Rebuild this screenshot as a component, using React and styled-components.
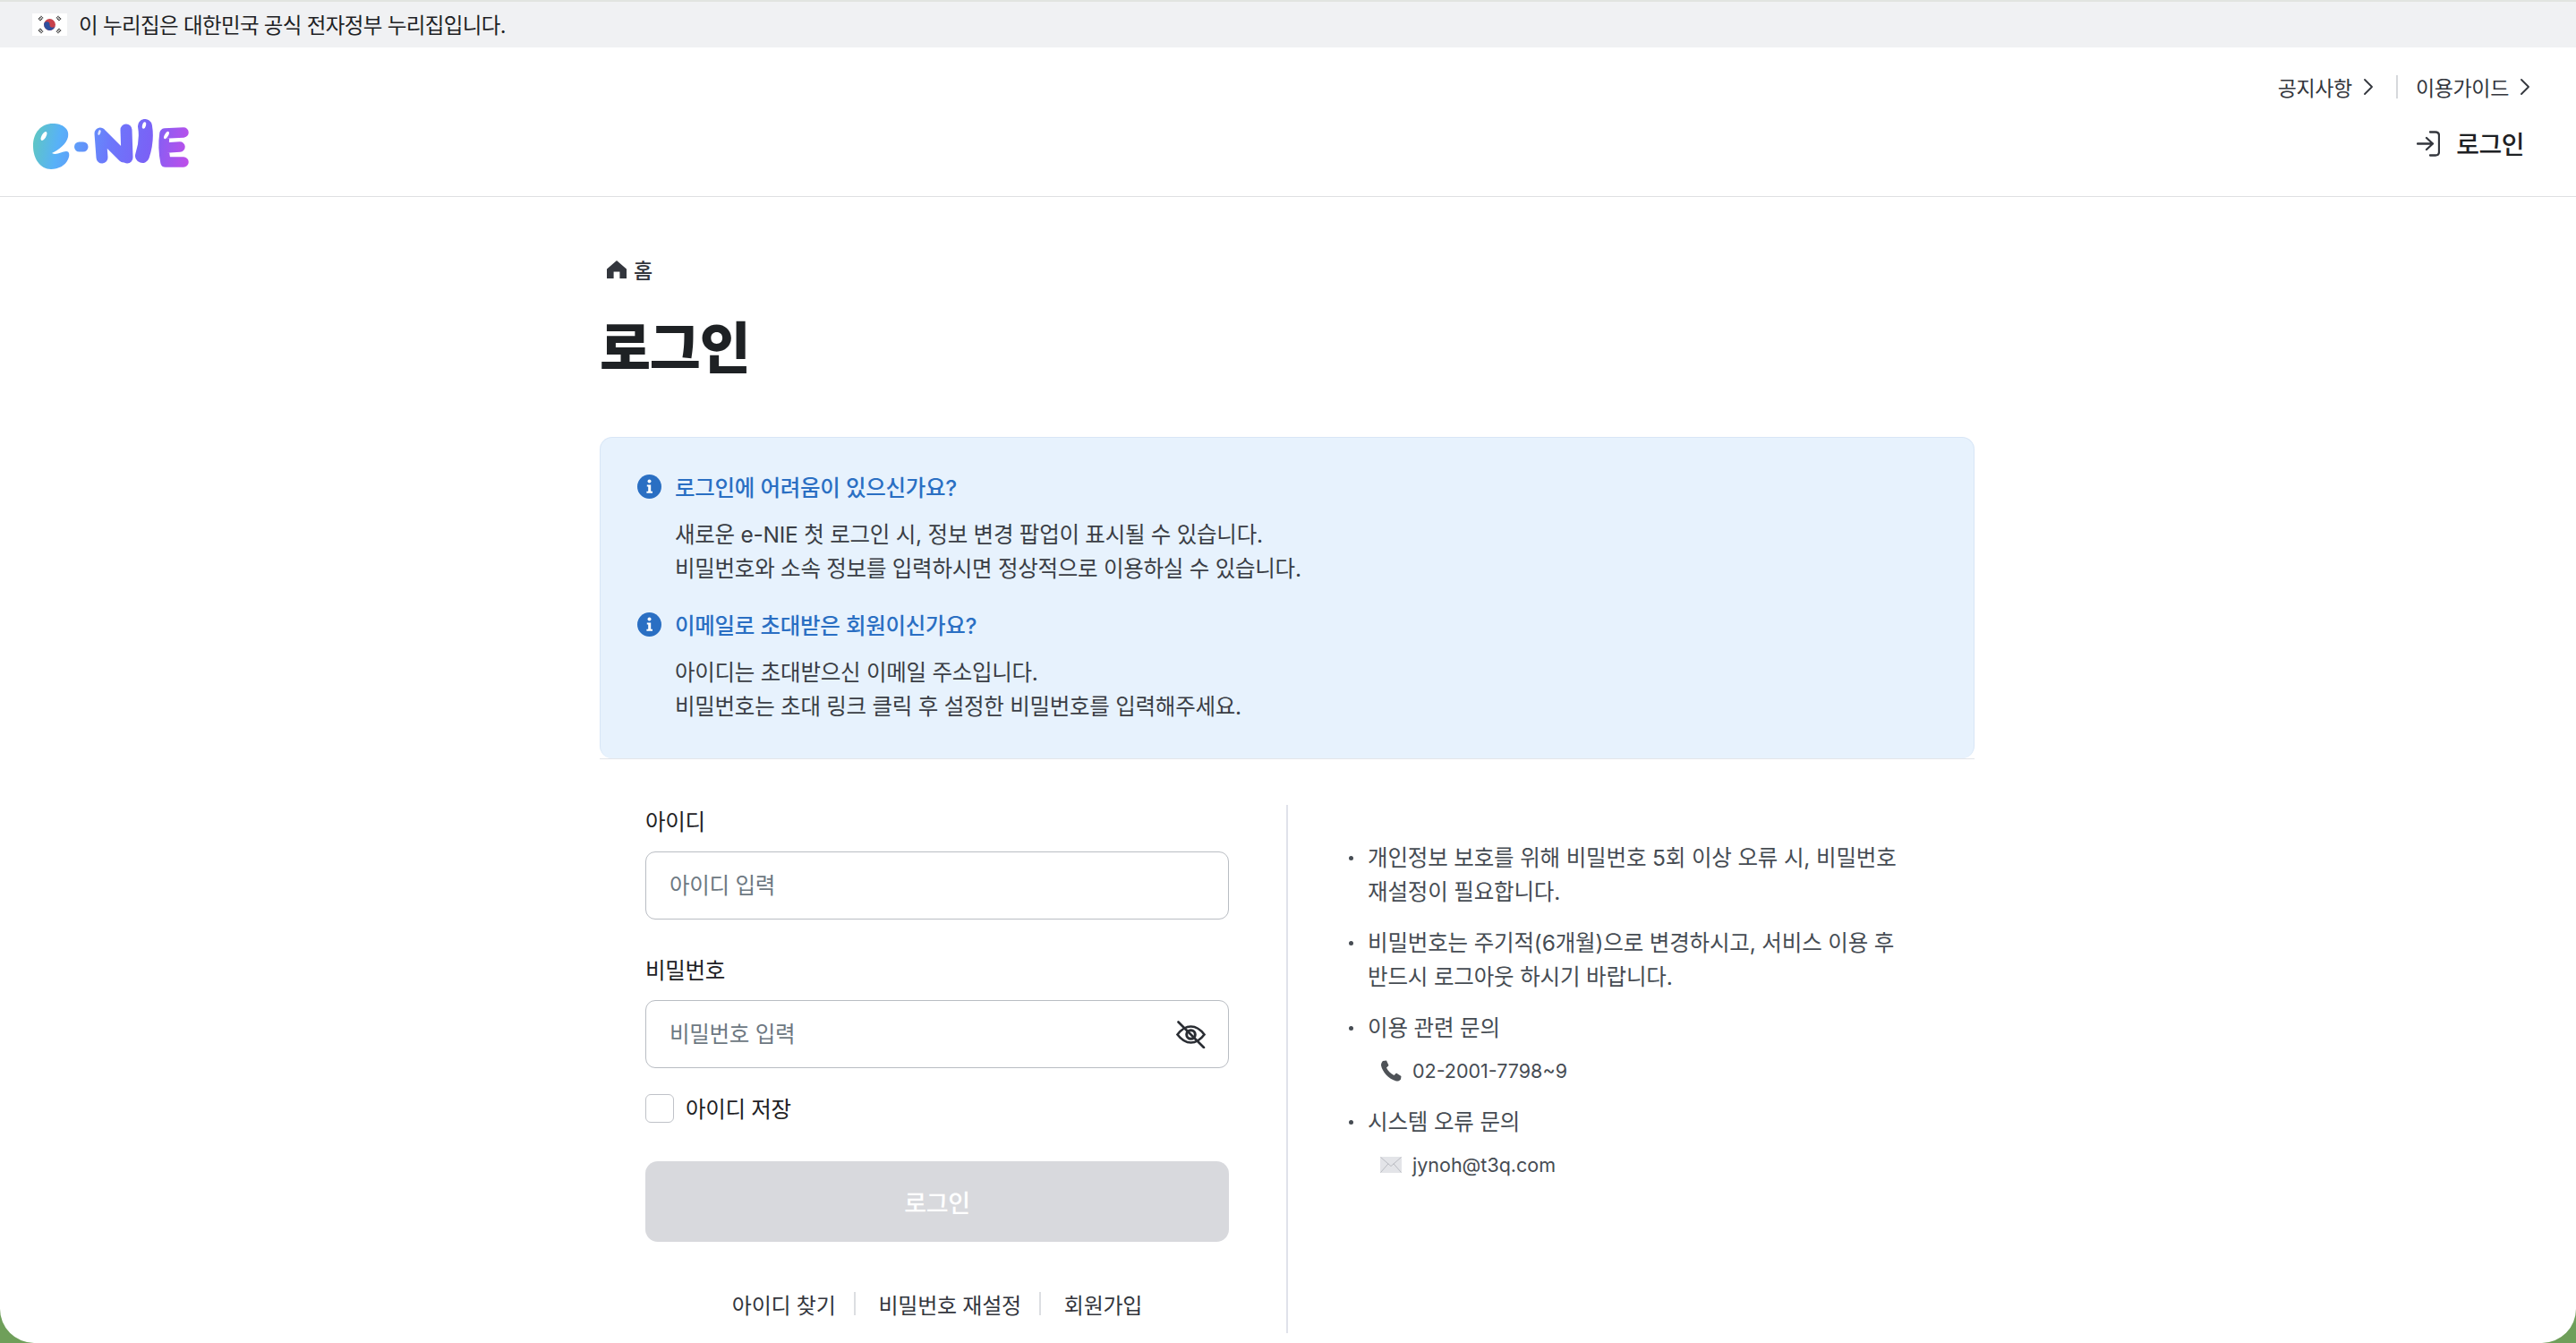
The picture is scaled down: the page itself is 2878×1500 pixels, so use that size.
import React from "react";
import styled, { createGlobalStyle } from "styled-components";

const FONT = `Inter, "Noto Sans CJK KR", "Noto Sans", sans-serif`;

const Global = createGlobalStyle`
  html, body { margin: 0; padding: 0; height: 1500px; overflow: hidden; background: #6f9f5a; }
  * { box-sizing: border-box; }
  body { font-family: ${FONT}; color: #1e2124; }
`;

const Page = styled.div`
  width: 2878px; height: 1500px; background: #fff; overflow: hidden;
  border-radius: 0 0 38px 38px;
`;
const Banner = styled.div`
  height: 53px; border-top: 2px solid #e1e4e0; background: #f0f1f3; padding: 0 0 1px 36px;
  display: flex; align-items: center; gap: 13px;
  font-size: 23.5px; letter-spacing: -0.63px; color: #1e2124;
`;
const Header = styled.header`
  height: 167px; border-bottom: 1px solid #dfe0e2;
  display: flex; justify-content: space-between; padding: 0 52px 0 37px;
`;
const LogoWrap = styled.div`margin-top: 80px; line-height: 0;`;
const HeaderRight = styled.div`
  display: flex; flex-direction: column; align-items: flex-end; padding-top: 29px;
`;
const UtilRow = styled.nav`display: flex; align-items: center; height: 29px;`;
const UtilLink = styled.a`
  display: flex; align-items: center; gap: 13px; font-size: 23px; letter-spacing: -0.35px; color: #33363d;
`;
const UtilSep = styled.span`width: 2px; height: 26px; background: #d6d8dc; margin: 0 20px 0 26px;`;
const LoginLink = styled.a`
  display: flex; align-items: center; gap: 18px; margin-top: 29px; margin-right: 6px; height: 40px;
  font-size: 28px; font-weight: 500; letter-spacing: -0.5px; color: #1e2124;
`;
const Main = styled.main`width: 1536px; margin: 0 auto 0 670px;`;
const Crumb = styled.div`
  display: flex; align-items: center; gap: 8px; margin-top: 66px; padding-left: 8px; height: 30px;
  font-size: 23px; font-weight: 500; letter-spacing: -0.4px; color: #33363d;
`;
const Title = styled.h1`
  margin: 39px 0 0; height: 69px; line-height: 69px;
  font-size: 62px; font-weight: 800; letter-spacing: -1.2px; color: #1e2124;
`;
const InfoWrap = styled.div`
  margin-top: 64px; border-bottom: 1px solid #e3e5e9;
`;
const InfoBox = styled.section`
  height: 359px; padding: 35px 41px 0; background: #e7f2fd;
  border: 1px solid #d8e6f6; border-bottom: 0; border-radius: 14px;
`;
const InfoHead = styled.div`
  display: flex; align-items: center; gap: 15px; height: 38px;
  margin-top: ${p => p.$top || 0}px;
  font-size: 24.5px; font-weight: 500; letter-spacing: -0.25px; color: #2a6fc3;
`;
const InfoText = styled.p`
  margin: 16px 0 0 42px; font-size: 24.5px; line-height: 38px; letter-spacing: -0.25px; color: #3a3e45;
`;
const FormRow = styled.div`
  display: grid; grid-template-columns: 767px 1fr; margin-top: 51px; height: 590px;
`;
const FormCol = styled.form`padding: 1px 64px 0 51px;`;
const Label = styled.label`
  display: block; height: 36px; line-height: 36px; margin-top: ${p => p.$top || 0}px;
  font-size: 24.5px; font-weight: 400; letter-spacing: -0.3px; color: #1e2124;
`;
const InputWrap = styled.div`
  display: flex; align-items: center; margin-top: 15px; height: 76px; padding: 0 25px 0 26px;
  background: #fff; border: 1.5px solid #b9bdc3; border-radius: 11px;
`;
const Input = styled.input`
  flex: 1; min-width: 0; border: 0; outline: 0; padding: 0; background: transparent;
  font-family: ${FONT}; font-size: 24.5px; letter-spacing: -0.25px; color: #1e2124;
  &::placeholder { color: #6d7882; opacity: 1; }
`;
const CheckRow = styled.label`
  display: flex; align-items: center; gap: 13px; margin-top: 29px; height: 31px;
  font-size: 24.5px; font-weight: 400; letter-spacing: -0.3px; color: #1e2124;
`;
const CheckBox = styled.input.attrs({ type: "checkbox" })`
  appearance: none; margin: 0; width: 32px; height: 32px; background: #fff;
  border: 1.5px solid #bfc2c8; border-radius: 6px;
`;
const SubmitBtn = styled.button`
  display: block; width: 100%; height: 90px; margin-top: 44px; border: 0; border-radius: 14px;
  background: #d8d9dd; color: #fff; font-family: ${FONT}; font-size: 27px; font-weight: 500; letter-spacing: -0.4px;
`;
const Links = styled.nav`
  display: flex; justify-content: center; align-items: center; margin-top: 54px; height: 30px;
  font-size: 24px; font-weight: 400; letter-spacing: -0.25px; color: #33363d;
`;
const LinkSep = styled.span`width: 2px; height: 26px; background: #dcdee2; margin: 0 26px 0 20px;`;
const SideCol = styled.ul`
  list-style: none; margin: 0; padding: 40px 0 0 69px; border-left: 2px solid #e0e2ea;
  display: flex; flex-direction: column; gap: 19px; width: 700px;
  font-size: 24.5px; line-height: 38px; letter-spacing: -0.15px; color: #464c53;
`;
const SideItem = styled.li`
  position: relative; padding-left: 20px;
  &::before {
    content: ""; position: absolute; left: -1px; top: 17px; width: 5px; height: 5px;
    border-radius: 50%; background: #464c53;
  }
`;
const Contact = styled.div`
  display: flex; align-items: center; gap: 12px; margin: 10px 0 0 14px;
  font-size: 21.5px; letter-spacing: 0; color: #464c53;
`;

const Logo = () => (
  <svg width="176" height="57" viewBox="0 0 176 57" aria-label="e-NIE" role="img">
    <defs>
      <linearGradient id="lg" x1="0" y1="10" x2="178" y2="45" gradientUnits="userSpaceOnUse">
        <stop offset="0" stopColor="#5fc8bf" />
        <stop offset="0.17" stopColor="#58b1f8" />
        <stop offset="0.48" stopColor="#6c78fb" />
        <stop offset="0.72" stopColor="#7a62f6" />
        <stop offset="1" stopColor="#c44de8" />
      </linearGradient>
    </defs>
    <path fill="url(#lg)" d="M22 5C33 5 41 11 39 20C37 28 29 34 21 38C26 41 32 36 37 36C41 36 41 41 39 45C36 52 28 56 20 56C8 56 0 44 0 30C0 15 9 5 22 5Z" />
    <g fill="none" stroke="url(#lg)" strokeLinecap="round" strokeLinejoin="round">
      <path strokeWidth="11" d="M51.5 31L56 31" />
      <path strokeWidth="13" d="M75 16L77 43M76 17L101 42M104 12L105 43" />
      <path strokeWidth="16" d="M125 8C127 20 125 32 122 41" />
      <path strokeWidth="11.5" d="M147 16L168 15M147 16C145 30 146 38 148 48L168 48M149 32L164 31" />
    </g>
    <g fill="#fff">
      <ellipse cx="12" cy="19" rx="2.4" ry="5.5" transform="rotate(30 12 19)" />
      <ellipse cx="74" cy="15" rx="1.4" ry="3" transform="rotate(20 74 15)" opacity=".8" />
      <ellipse cx="124" cy="7" rx="2" ry="3.8" transform="rotate(15 124 7)" />
      <ellipse cx="149" cy="18" rx="2" ry="4.6" transform="rotate(30 149 18)" />
    </g>
  </svg>
);

const Flag = () => (
  <svg width="39" height="25" viewBox="0 0 39 25">
    <rect width="39" height="25" fill="#fff" />
    <circle cx="19.5" cy="12.5" r="6.4" fill="#c8414b" />
    <path d="M13.1 12.5a3.2 3.2 0 0 1 6.4 0a3.2 3.2 0 0 0 6.4 0a6.4 6.4 0 0 1-12.8 0z" fill="#2d4f9e" />
    <g stroke="#2a2a2a" strokeWidth="1.5" strokeDasharray="1.4 .5">
      <path d="M7 6.5L10.5 3M8.5 8L12 4.5" />
      <path d="M32 6.5L28.5 3M30.5 8L27 4.5" />
      <path d="M7 18.5L10.5 22M8.5 17L12 20.5" />
      <path d="M32 18.5L28.5 22M30.5 17L27 20.5" />
    </g>
  </svg>
);

const Chevron = () => (
  <svg width="10" height="18" viewBox="0 0 10 18" fill="none" stroke="#33363d" strokeWidth="1.8" strokeLinecap="round" strokeLinejoin="round">
    <path d="M1 1L9 9L1 17" />
  </svg>
);

const LoginIcon = () => (
  <svg width="26" height="29" viewBox="0 0 26 29" fill="none" stroke="#33363d" strokeWidth="2.3" strokeLinecap="round" strokeLinejoin="round">
    <path d="M15 1.5H21C23.5 1.5 25 3 25 5.5V23.5C25 26 23.5 27.5 21 27.5H15" />
    <path d="M1 14.5H18M11 8L18 14.5L11 21" />
  </svg>
);

const HomeIcon = () => (
  <svg width="22" height="22" viewBox="0 0 22 22" fill="#33363d">
    <path d="M11 1L22 10.4V21H14.4V13.6H7.6V21H0V10.4Z" />
  </svg>
);

const InfoIcon = () => (
  <svg width="27" height="27" viewBox="0 0 27 27">
    <circle cx="13.5" cy="13.5" r="13.5" fill="#2a6fc3" />
    <circle cx="13.5" cy="7.6" r="2" fill="#fff" />
    <path d="M10.8 11.4H15.2V18.8H17V20.8H10.4V18.8H12.2V13.4H10.8Z" fill="#fff" />
  </svg>
);

const EyeOff = () => (
  <svg width="33" height="31" viewBox="0 0 33 31" fill="none" stroke="#2a2d33" strokeWidth="2.6" strokeLinecap="round">
    <path d="M1.5 15.5C6 9.5 11 6.5 16.5 6.5S27 9.5 31.5 15.5C27 21.5 22 24.5 16.5 24.5S6 21.5 1.5 15.5Z" />
    <circle cx="16.5" cy="15.5" r="4.8" strokeWidth="3" />
    <path d="M2.5 1.5L31 30" />
  </svg>
);

const PhoneIcon = () => (
  <svg width="24" height="24" viewBox="0 0 24 24">
    <path d="M3 1L7 0.5L9.5 6L7 8.5C8.5 12 11.5 15 15.5 17L18 14.5L23.5 18L23 21.5C22 23 20 23.8 18 23.5C9 21 2.5 13 1 6C1 4 1.7 2 3 1Z" fill="#4e5257" />
  </svg>
);

const MailIcon = () => (
  <svg width="24" height="18" viewBox="0 0 24 18">
    <rect width="24" height="18" fill="#e3e4e8" />
    <path d="M0.5 0.5L12 10.5L23.5 0.5M0.5 17.5L9 7.8M23.5 17.5L15 7.8" fill="none" stroke="#babcc2" strokeWidth="1" />
  </svg>
);

export default function App() {
  return (
    <>
      <Global />
      <Page>
        <Banner><Flag />이 누리집은 대한민국 공식 전자정부 누리집입니다.</Banner>
        <Header>
          <LogoWrap><Logo /></LogoWrap>
          <HeaderRight>
            <UtilRow>
              <UtilLink>공지사항<Chevron /></UtilLink>
              <UtilSep />
              <UtilLink>이용가이드<Chevron /></UtilLink>
            </UtilRow>
            <LoginLink><LoginIcon />로그인</LoginLink>
          </HeaderRight>
        </Header>
        <Main>
          <Crumb><HomeIcon />홈</Crumb>
          <Title>로그인</Title>
          <InfoWrap>
            <InfoBox>
              <InfoHead><InfoIcon />로그인에 어려움이 있으신가요?</InfoHead>
              <InfoText>새로운 e-NIE 첫 로그인 시, 정보 변경 팝업이 표시될 수 있습니다.<br />비밀번호와 소속 정보를 입력하시면 정상적으로 이용하실 수 있습니다.</InfoText>
              <InfoHead $top={24}><InfoIcon />이메일로 초대받은 회원이신가요?</InfoHead>
              <InfoText>아이디는 초대받으신 이메일 주소입니다.<br />비밀번호는 초대 링크 클릭 후 설정한 비밀번호를 입력해주세요.</InfoText>
            </InfoBox>
          </InfoWrap>
          <FormRow>
            <FormCol>
              <Label>아이디</Label>
              <InputWrap><Input placeholder="아이디 입력" /></InputWrap>
              <Label $top={39}>비밀번호</Label>
              <InputWrap><Input placeholder="비밀번호 입력" /><EyeOff /></InputWrap>
              <CheckRow><CheckBox />아이디 저장</CheckRow>
              <SubmitBtn type="button">로그인</SubmitBtn>
              <Links>
                <a>아이디 찾기</a><LinkSep />
                <a>비밀번호 재설정</a><LinkSep />
                <a>회원가입</a>
              </Links>
            </FormCol>
            <SideCol>
              <SideItem>개인정보 보호를 위해 비밀번호 5회 이상 오류 시, 비밀번호<br />재설정이 필요합니다.</SideItem>
              <SideItem>비밀번호는 주기적(6개월)으로 변경하시고, 서비스 이용 후<br />반드시 로그아웃 하시기 바랍니다.</SideItem>
              <SideItem>이용 관련 문의
                <Contact><PhoneIcon />02-2001-7798~9</Contact>
              </SideItem>
              <SideItem>시스템 오류 문의
                <Contact><MailIcon />jynoh@t3q.com</Contact>
              </SideItem>
            </SideCol>
          </FormRow>
        </Main>
      </Page>
    </>
  );
}
